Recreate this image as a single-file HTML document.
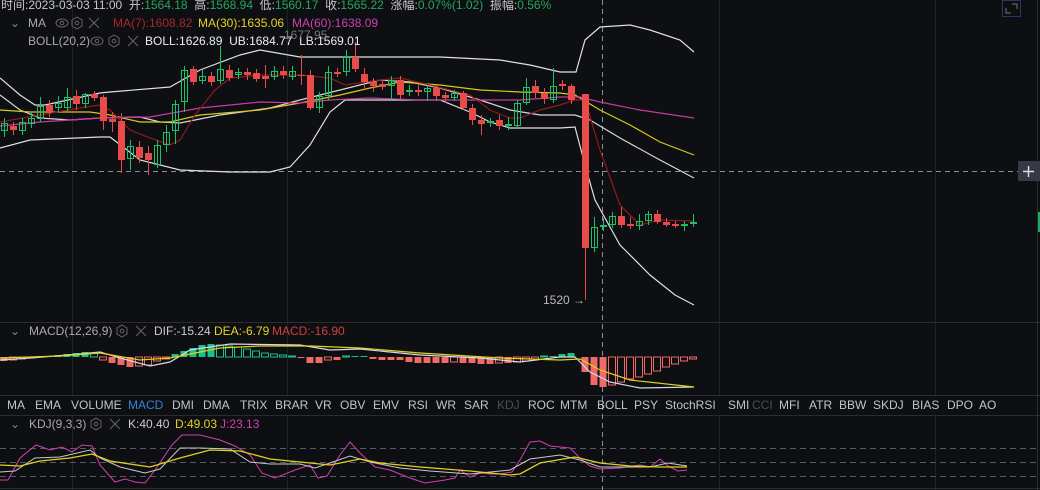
<!DOCTYPE html><html><head><meta charset="utf-8"><style>
body{margin:0;background:#0e0f12;width:1040px;height:490px;overflow:hidden;font-family:"Liberation Sans","Noto Sans CJK SC",sans-serif}
svg{position:absolute;left:0;top:0}
.t{position:absolute;font-size:12px;white-space:nowrap;line-height:14px}
</style></head><body>
<svg id="s" width="1040" height="490" xmlns="http://www.w3.org/2000/svg"></svg>
<div class="t" style="left:1px;top:-2px;color:#c8c8c8">时间:2023-03-03 11:00 &nbsp;开:<span style="color:#26a65b">1564.18</span> &nbsp;高:<span style="color:#26a65b">1568.94</span> &nbsp;低:<span style="color:#26a65b">1560.17</span> &nbsp;收:<span style="color:#26a65b">1565.22</span> &nbsp;涨幅:<span style="color:#26a65b">0.07%(1.02)</span> &nbsp;振幅:<span style="color:#26a65b">0.56%</span></div>
<div class="t" style="left:10px;top:16px;color:#888">⌄</div>
<div class="t" style="left:28px;top:16px;color:#aaa">MA</div>
<div class="t" style="left:113px;top:16px;color:#a8262a">MA(7):1608.82</div>
<div class="t" style="left:198px;top:16px;color:#e6d320">MA(30):1635.06</div>
<div class="t" style="left:292px;top:16px;color:#d23fb0">MA(60):1638.09</div>
<div class="t" style="left:28px;top:34px;color:#aaa">BOLL(20,2)</div>
<div class="t" style="left:145px;top:34px;color:#eee">BOLL:1626.89 &nbsp;UB:1684.77 &nbsp;LB:1569.01</div>
<div class="t" style="left:284px;top:28px;color:#777">1677.95 →</div>
<div class="t" style="left:543px;top:293px;color:#bbb">1520 →</div>
<div class="t" style="left:10px;top:324px;color:#888">⌄</div>
<div class="t" style="left:29px;top:324px;color:#aaa">MACD(12,26,9)</div>
<div class="t" style="left:154px;top:324px;color:#ccc">DIF:-15.24</div>
<div class="t" style="left:214px;top:324px;color:#e6d320">DEA:-6.79</div>
<div class="t" style="left:272px;top:324px;color:#d0403a">MACD:-16.90</div>
<div class="t" style="left:10px;top:417px;color:#888">⌄</div>
<div class="t" style="left:29px;top:417px;color:#aaa">KDJ(9,3,3)</div>
<div class="t" style="left:128px;top:417px;color:#ccc">K:40.40</div>
<div class="t" style="left:175px;top:417px;color:#e6d320">D:49.03</div>
<div class="t" style="left:220px;top:417px;color:#d23fb0">J:23.13</div>
<div id="tb"></div>
<script>
var s=document.getElementById('s'),h='';
function L(x1,y1,x2,y2,c,w,d){h+='<line x1="'+x1+'" y1="'+y1+'" x2="'+x2+'" y2="'+y2+'" stroke="'+c+'" stroke-width="'+(w||1)+'"'+(d?' stroke-dasharray="'+d+'"':'')+'/>';}
function P(a,c,w){h+='<polyline fill="none" stroke="'+c+'" stroke-width="'+(w||1.2)+'" points="'+a.join(' ')+'"/>';}
function R(x,y,w,hh,c,hol){h+='<rect x="'+x+'" y="'+y+'" width="'+w+'" height="'+Math.max(hh,1)+'" '+(hol?'fill="none" stroke="'+c+'"':'fill="'+c+'"')+'/>';}
// grid
[72,287,719,935].forEach(function(x){L(x+.5,0,x+.5,395,'#1f2126');L(x+.5,415,x+.5,490,'#1f2126');});
L(0,322.5,1040,322.5,'#2a2c31');L(0,395.5,1040,395.5,'#2a2c31');L(0,415.5,1040,415.5,'#2a2c31');L(0,488.5,1040,488.5,'#2a2c31');
L(1037.5,0,1037.5,490,'#2a2c31');
[448,462,476].forEach(function(y){L(0,y+.5,1036,y+.5,'#555a63',1,'6,4');});
L(602.5,0,602.5,490,'#8a909a',1,'5,4');L(0,171.5,1018,171.5,'#8a909a',1,'5,4');
// lines main
P([[0,78],[20,95],[35,105],[45,105],[100,93],[110,92],[170,87],[200,70],[240,55],[260,50],[300,57],[350,57],[400,57],[440,57],[500,60],[530,65],[560,72],[576,72],[585,40],[600,27],[630,25],[650,30],[680,40],[694,52]],'#e0e0e0');
P([[0,148],[30,140],[100,137],[110,137],[140,160],[180,170],[230,172],[270,172],[290,167],[310,145],[330,112],[345,100],[400,100],[440,100],[470,112],[490,122],[510,128],[560,128],[575,127],[585,165],[595,200],[620,245],[650,275],[675,295],[694,305]],'#e0e0e0');
P([[0,95],[20,110],[40,118],[70,120],[100,118],[140,117],[160,122],[180,123],[220,115],[270,108],[300,100],[340,90],[380,80],[410,82],[440,88],[480,100],[510,110],[540,115],[575,115],[590,120],[620,138],[660,160],[694,178]],'#d8d8d8');
P([[0,110],[30,112],[90,112],[110,115],[140,122],[170,122],[200,115],[260,110],[300,103],[340,95],[370,88],[400,82],[440,85],[480,90],[520,92],[560,93],[575,95],[600,110],[630,125],[660,142],[694,155]],'#d8c81e');
P([[0,126],[40,122],[100,118],[150,117],[200,108],[260,102],[300,103],[330,100],[370,98],[420,100],[480,100],[520,100],[560,97],[580,97],[600,102],[640,110],[694,118]],'#c53aa0');
P([[0,122],[40,115],[80,108],[100,105],[110,110],[130,130],[150,138],[170,145],[180,140],[195,115],[215,90],[230,78],[260,75],[300,75],[330,78],[345,85],[380,80],[400,78],[430,85],[470,95],[490,110],[510,118],[520,118],[540,110],[560,105],[575,100],[585,100],[600,150],[620,205],[640,225],[660,220],[694,221]],'#8e1a1e');
// candles: [top,bottom,green,high,low]
var c=[[123,131,1,118,137],[126,130,0,122,135],[122,131,1,118,135],[118,124,1,112,128],[106,119,1,97,122],[105,112,0,100,117],[103,108,1,96,113],[97,108,1,88,111],[96,104,0,90,110],[94,104,1,93,108],[94,98,0,91,101],[97,121,0,95,130],[119,122,0,112,132],[121,160,0,113,173],[146,159,1,140,170],[147,158,0,141,163],[153,160,0,146,175],[145,165,1,140,168],[132,145,1,125,152],[104,131,1,100,144],[70,102,1,66,112],[69,82,0,66,85],[76,81,1,70,84],[76,82,0,72,86],[69,81,1,46,84],[70,78,0,65,81],[72,75,1,68,79],[72,75,0,68,80],[73,79,0,69,82],[76,79,0,65,88],[71,77,1,66,80],[71,75,0,66,79],[71,77,1,66,80],[75,76,0,55,85],[75,108,0,70,110],[96,108,1,92,113],[72,96,1,66,100],[72,74,0,68,77],[56,72,1,50,76],[57,69,0,42,72],[74,82,0,68,88],[82,86,0,78,92],[84,87,0,80,90],[80,86,1,76,100],[80,95,0,76,100],[90,92,1,85,96],[90,92,0,85,96],[88,92,1,85,101],[88,96,0,85,101],[95,98,0,92,103],[93,98,1,90,101],[93,108,0,91,110],[108,120,0,104,125],[120,124,0,115,135],[121,123,1,118,127],[120,126,0,115,130],[124,126,1,117,130],[103,126,1,100,128],[87,103,1,78,105],[86,93,0,80,98],[93,99,0,88,104],[86,100,1,68,103],[84,86,0,80,90],[86,100,0,84,104],[94,248,0,94,300],[227,248,1,217,252],[225,227,1,218,231],[216,225,1,212,228],[216,225,0,207,228],[224,226,0,217,229],[221,226,1,214,230],[214,221,1,211,225],[214,222,0,210,224],[222,225,0,218,227],[224,226,0,221,228],[224,226,1,221,231],[222,224,1,214,227]];
c.forEach(function(a,i){var x=4+9*i;if(i>=64)x=585+9*(i-64);var col=a[2]?'#1fbe6a':'#e84c4a';
L(x+.5,a[3],x+.5,a[4],col);if(a[2])R(x-2.5,a[0]+.5,6,a[1]-a[0]-1,col,1);else R(x-3,a[0],7,a[1]-a[0],col);});
// macd hist
var v=[-4,-3,-2,-1,1,1,2,3,4,5,4,-3,-6,-8,-10,-9,-8,-4,-2,3,6,9,12,13,12,11,10,8,6,4,3,2,1,-1,-6,-6,-3,-3,1,1,1,-2,-3,-3,-3,-5,-6,-6,-6,-6,-5,-6,-6,-7,-7,-6,-6,-5,-4,-2,1,1,3,4,-15,-28,-30,-28,-25,-22,-20,-17,-14,-10,-7,-4,-2];
var z=357;v.forEach(function(q,i){var x=4+9*i;if(i>=64)x=585+9*(i-64);var prev=i?v[i-1]:0;var hol=Math.abs(q)<Math.abs(prev);
var col=q>0?'#18c08a':'#f06a66';if(q>0)R(x-3.5,z-q,7,q,col,hol);else R(x-3.5,z,7,-q,col,hol);});
P([[0,360],[30,358],[80,354],[100,352],[120,358],[150,366],[170,362],[190,350],[230,344],[300,345],[330,350],[360,349],[420,355],[480,358],[520,362],[560,357],[575,357],[590,372],[610,382],[640,388],[694,387]],'#d8d8e8');
P([[0,358],[60,356],[100,353],[140,360],[170,358],[220,348],[260,346],[310,346],[360,348],[420,353],[500,358],[560,360],[580,359],[600,370],[630,380],[694,387]],'#e0d020');
// kdj
P([[0,480],[8,480],[20,458],[36,445],[50,450],[62,447],[72,452],[82,445],[92,446],[100,465],[115,482],[125,479],[135,482],[145,483],[155,470],[172,445],[182,435],[200,435],[220,440],[235,446],[250,455],[262,473],[275,478],[295,470],[310,465],[318,478],[327,476],[340,455],[350,442],[360,453],[375,467],[390,470],[410,478],[425,483],[445,480],[455,478],[460,470],[470,477],[480,473],[490,474],[500,474],[512,472],[520,460],[530,442],[540,441],[550,446],[570,448],[580,458],[590,466],[600,469],[620,468],[640,465],[650,467],[660,459],[668,466],[678,471],[687,470]],'#d23fb0',1);
P([[0,472],[15,471],[35,458],[60,457],[90,450],[100,458],[120,467],[145,473],[160,469],[180,448],[200,448],[230,449],[250,462],[270,464],[300,464],[315,468],[330,463],[350,456],[370,462],[400,468],[430,471],[470,474],[510,470],[530,459],[560,455],[580,460],[600,467],[650,467],[668,463],[687,466]],'#c8c8c8',1);
P([[0,465],[20,466],[40,461],[70,458],[92,454],[110,461],[150,467],[180,458],[210,450],[240,451],[270,459],[300,462],[330,465],[360,459],[380,463],[420,467],[470,471],[510,475],[520,474],[540,463],[575,457],[600,463],[630,466],[660,467],[687,467]],'#e0d020',1.3);
// icons
function eye(x,y){h+='<ellipse cx="'+x+'" cy="'+y+'" rx="6" ry="4" fill="none" stroke="#666"/><circle cx="'+x+'" cy="'+y+'" r="1.8" fill="none" stroke="#666"/>';}
function hex(x,y){h+='<polygon points="'+[[x,y-6],[x+5,y-3],[x+5,y+3],[x,y+6],[x-5,y+3],[x-5,y-3]].join(' ')+'" fill="none" stroke="#666"/><circle cx="'+x+'" cy="'+y+'" r="1.8" fill="none" stroke="#666"/>';}
function xx(x,y){L(x-5,y-5,x+5,y+5,'#666');L(x-5,y+5,x+5,y-5,'#666');}
eye(62,23);hex(77,23);xx(94,23);eye(97,41);hex(114,41);xx(133,41);hex(122,331);xx(141,331);hex(96,424);xx(115,424);
h+='<rect x="1002.5" y="0.5" width="18" height="16" fill="none" stroke="#2c3566"/><polyline points="1006,8 1006,13 1011,13" fill="none" stroke="#777"/><polyline points="1012,4 1017,4 1017,9" fill="none" stroke="#777"/>';
h+='<rect x="1018" y="161" width="22" height="20" fill="#363a45"/>';L(1023,171.5,1034,171.5,'#ddd',1.5);L(1028.5,166,1028.5,177,'#ddd',1.5);
h+='<rect x="1038" y="212" width="2" height="20" fill="#1fa865"/>';
s.innerHTML=h;
var tb=[['MA',7],['EMA',35],['VOLUME',71],['MACD',128,'#3d7fd6'],['DMI',172],['DMA',203],['TRIX',240],['BRAR',275],['VR',315],['OBV',340],['EMV',373],['RSI',408],['WR',436],['SAR',464],['KDJ',497,'#4a4d55'],['ROC',528],['MTM',560],['BOLL',597],['PSY',634],['StochRSI',665],['SMI',728],['CCI',752,'#4a4d55'],['MFI',779],['ATR',809],['BBW',839],['SKDJ',873],['BIAS',912],['DPO',947],['AO',979]],o='';
tb.forEach(function(t){o+='<div class="t" style="left:'+t[1]+'px;top:398px;color:'+(t[2]||'#c0c4cc')+'">'+t[0]+'</div>';});
document.getElementById('tb').innerHTML=o;
</script>
</body></html>
